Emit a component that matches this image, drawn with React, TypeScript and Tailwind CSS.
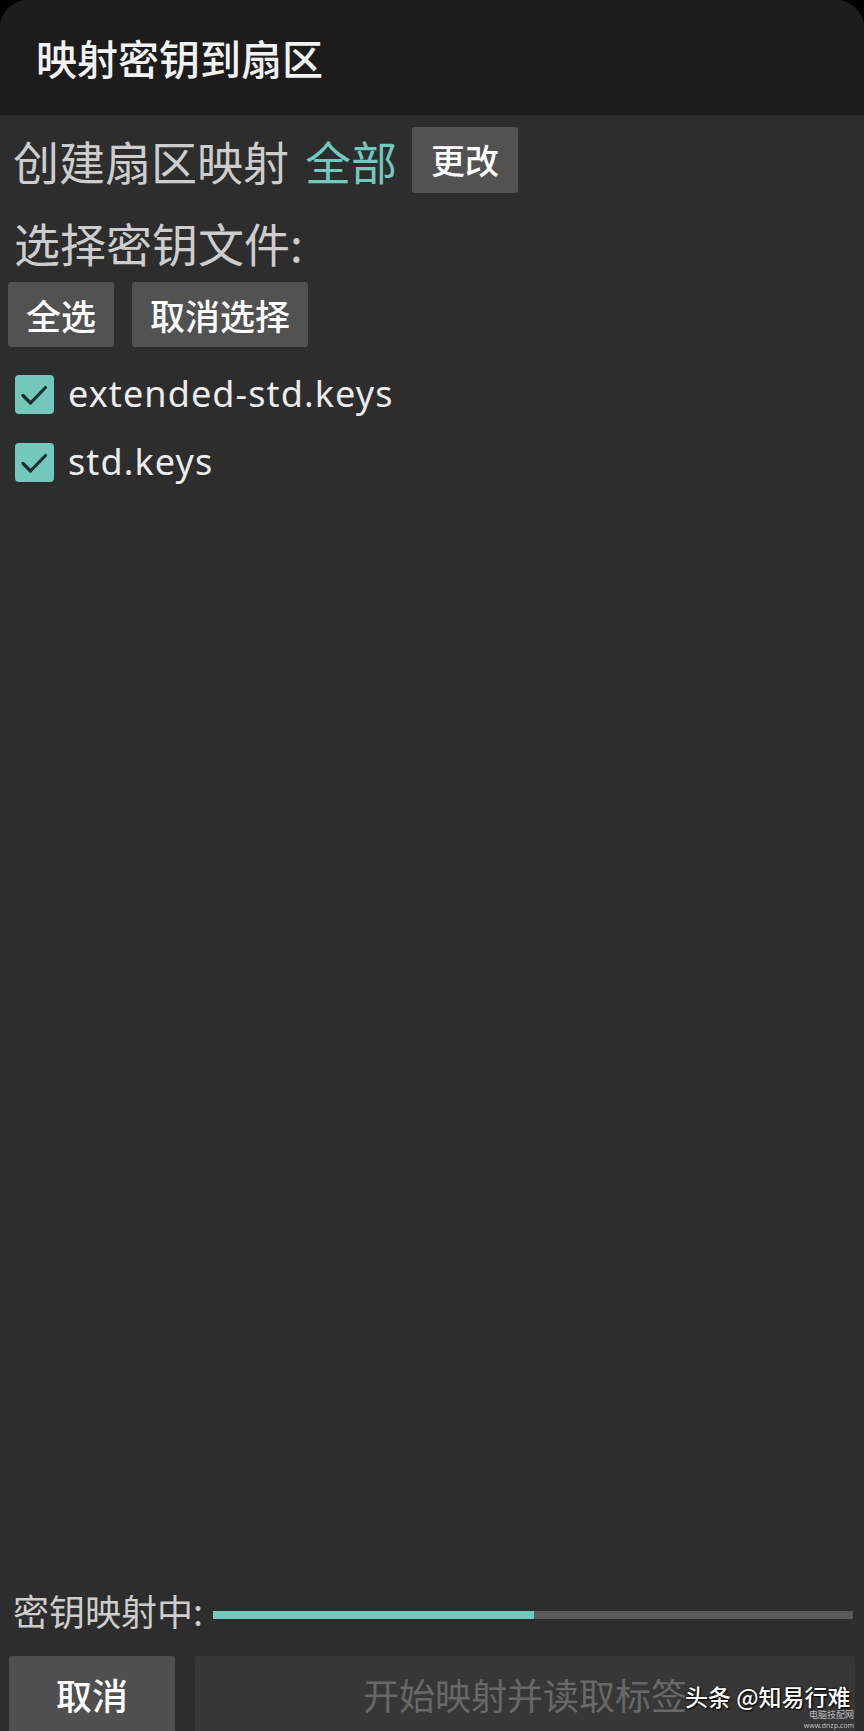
const cjk = { fontFamily: '"Noto Sans CJK SC", "Noto Sans", sans-serif' }
const latin = { fontFamily: '"Noto Sans", "Noto Sans CJK SC", sans-serif' }

const keyFiles = ["extended-std.keys", "std.keys"]

function CheckBox() {
  return (
    <div className="flex h-[39px] w-[39px] items-center justify-center rounded-[4px] bg-[#74c7bb]">
      <svg width="39" height="39" viewBox="0 0 39 39" fill="none">
        <path
          d="M8 20.5 L15.5 28 L30.5 12.5"
          stroke="#1d2f2c"
          strokeWidth="3.2"
          strokeLinecap="round"
          strokeLinejoin="round"
        />
      </svg>
    </div>
  )
}

export default function App() {
  return (
    <div className="relative h-[1731px] w-[864px] overflow-hidden bg-black" style={cjk}>
      <div className="flex h-full flex-col overflow-hidden rounded-t-[28px] bg-[#2d2d2d]">
        <div className="flex h-[115px] shrink-0 items-center bg-[#1c1c1c] pl-[36px]">
          <span className="text-[41px] font-medium leading-none text-[#f2f2f2]">映射密钥到扇区</span>
        </div>

        <div className="mt-[12px] flex h-[66px] items-center pl-[13px]">
          <span className="text-[46px] leading-none text-[#cdcdcd]">创建扇区映射</span>
          <span className="ml-[16px] text-[46px] leading-none text-[#72c9bd]">全部</span>
          <button className="ml-[15px] h-[66px] rounded-[3px] bg-[#525252] px-[19px] text-[34px] font-medium leading-none text-white">
            更改
          </button>
        </div>

        <div className="mt-[26px] pl-[14px] text-[46px] leading-none text-[#cdcdcd]">选择密钥文件:</div>

        <div className="mt-[17px] flex gap-[18px] pl-[8px]">
          <button className="h-[65px] rounded-[3px] bg-[#525252] px-[18px] text-[35px] font-medium leading-none text-white">
            全选
          </button>
          <button className="h-[65px] rounded-[3px] bg-[#525252] px-[18px] text-[35px] font-medium leading-none text-white">
            取消选择
          </button>
        </div>

        <div className="mt-[13px] flex flex-col">
          {keyFiles.map((file) => (
            <div key={file} className="flex h-[68px] items-center pl-[15px]">
              <CheckBox />
              <span
                className="ml-[14px] text-[36px] leading-none tracking-[1.1px] text-[#ececec]"
                style={latin}
              >
                {file}
              </span>
            </div>
          ))}
        </div>

        <div className="mt-auto flex flex-col">
          <div className="flex h-[46px] items-center pl-[13px] pr-[11px]">
            <span className="text-[36px] leading-none text-[#cdcdcd]">密钥映射中:</span>
            <div className="ml-[10px] mt-[10px] h-[8px] flex-1 bg-[#5a5a5a]">
              <div className="h-full bg-[#6fcabe]" style={{ width: "50.2%" }} />
            </div>
          </div>

          <div className="mt-[23px] flex h-[75px] gap-[20px] pl-[9px] pr-[9px]">
            <button className="w-[166px] rounded-t-[3px] bg-[#4f4f4f] text-[36px] font-medium leading-none text-white">
              取消
            </button>
            <button className="flex-1 rounded-t-[3px] bg-[#373737] text-[36px] leading-none text-[#686868]">
              开始映射并读取标签
            </button>
          </div>
        </div>
      </div>

      <div className="absolute left-[685px] top-[1685px]">
        <span
          className="text-[23px] font-medium leading-none text-white"
          style={{ textShadow: "0 0 2px #000, 1px 1px 2px #000" }}
        >
          头条 @知易行难
        </span>
      </div>
      <div className="absolute right-[10px] top-[1710px] flex flex-col items-end leading-none text-[#bdbdbd]">
        <span className="text-[9px]">电脑技配网</span>
        <span className="mt-[3px] text-[7px]" style={latin}>www.dnzp.com</span>
      </div>
    </div>
  )
}
